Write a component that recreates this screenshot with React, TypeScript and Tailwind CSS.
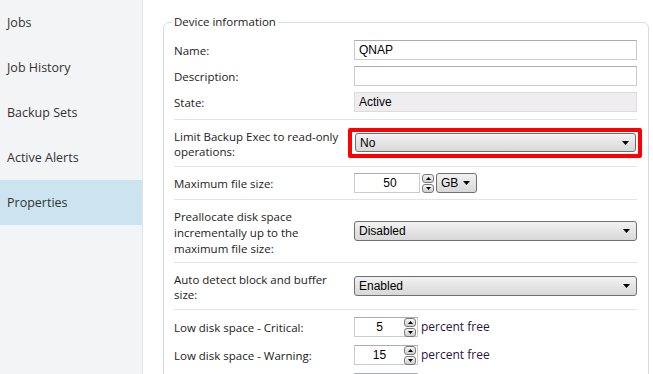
import React from 'react';

// 왼쪽 탐색 메뉴 항목
const navItems = ['Jobs', 'Job History', 'Backup Sets', 'Active Alerts', 'Properties'];

// 드롭다운 화살표 (작은 검은 삼각형)
function Caret() {
  return (
    <svg width="7" height="4" viewBox="0 0 7 4" className="shrink-0">
      <path d="M0 0 H7 L3.5 4 Z" fill="#000" />
    </svg>
  );
}

// 회색 그라데이션 콤보박스
function Select({ value, className = '' }: { value: string; className?: string }) {
  return (
    <div
      className={`flex items-center justify-between rounded-[3px] border border-[#707070] bg-gradient-to-b from-[#f2f2f2] to-[#d8d8d8] pl-[4px] pr-[6px] text-[12px] leading-none text-black font-['Liberation_Sans',Arial,sans-serif] ${className}`}
    >
      <span>{value}</span>
      <Caret />
    </div>
  );
}

// 숫자 증감 버튼 (위/아래)
function Spinner() {
  const btn =
    'flex h-[9px] w-[12px] items-center justify-center rounded-[3px] border border-[#7a7a7a] bg-gradient-to-b from-[#f4f4f4] to-[#cfcfcf]';
  return (
    <div className="flex flex-col justify-center gap-[1px]">
      <div className={btn}>
        <svg width="5" height="3" viewBox="0 0 5 3">
          <path d="M0 3 H5 L2.5 0 Z" fill="#000" />
        </svg>
      </div>
      <div className={btn}>
        <svg width="5" height="3" viewBox="0 0 5 3">
          <path d="M0 0 H5 L2.5 3 Z" fill="#000" />
        </svg>
      </div>
    </div>
  );
}

// 텍스트 입력 상자
function TextBox({ value = '', disabled = false }: { value?: string; disabled?: boolean }) {
  return (
    <div
      className={`flex h-[20px] items-center border ${
        disabled ? 'border-[#dcdcdc] bg-[#efedf0]' : 'border-[#c8ccd0] border-t-[#abadb3] bg-white'
      } px-[4px] text-[12px] text-black font-['Liberation_Sans',Arial,sans-serif]`}
    >
      {value}
    </div>
  );
}

// 퍼센트 입력 (스피너가 상자 안에 있음)
function PercentBox({ value, unit = true }: { value: string; unit?: boolean }) {
  return (
    <div className="flex items-center gap-[3px]">
      <div className="flex h-[20px] w-[64px] items-center border border-[#c8ccd0] border-t-[#abadb3] bg-white pr-[1px]">
        <span className="flex-1 text-center text-[12px] text-black font-['Liberation_Sans',Arial,sans-serif]">{value}</span>
        <Spinner />
      </div>
      {unit && <span className="text-[12px] text-[#2a1440]">percent free</span>}
    </div>
  );
}

function Separator() {
  return <div className="h-px bg-[#e3e3e3]" />;
}

function Row({
  label,
  height,
  children,
}: {
  label: React.ReactNode;
  height: string;
  children: React.ReactNode;
}) {
  return (
    <div className={`flex items-center ${height}`}>
      <div className="w-[180px] shrink-0 leading-[15px]">{label}</div>
      <div className="flex-1">{children}</div>
    </div>
  );
}

export default function App() {
  return (
    <div className="flex h-[374px] w-[653px] overflow-hidden bg-white font-['Open_Sans','Noto_Sans',sans-serif]">
      {/* 사이드바 */}
      <div className="w-[143px] shrink-0 border-r border-[#e1e4e8] bg-[#f3f4f6]">
        {navItems.map((item) => (
          <div
            key={item}
            className={`flex h-[45px] items-center pl-[7px] pt-[2px] text-[12.5px] text-[#333] ${
              item === 'Properties' ? 'bg-[#cce4f0]' : ''
            }`}
          >
            {item}
          </div>
        ))}
      </div>

      {/* 속성 패널 */}
      <div className="flex-1 pl-[20px] pr-[4px] pt-[14px]">
        <fieldset className="h-[400px] rounded-[6px] border border-[#d6dde2] pl-[10px] pr-[11px] text-[11.5px] text-[#222]">
          <legend className="-ml-[2px] px-[2px] leading-[16px]">Device information</legend>

          <div className="pt-[7px]">
            <Row label="Name:" height="h-[26px]">
              <TextBox value="QNAP" />
            </Row>
            <Row label="Description:" height="h-[26px]">
              <TextBox />
            </Row>
            <Row label="State:" height="h-[26px]">
              <TextBox value="Active" disabled />
            </Row>
          </div>

          <div className="mt-[4px]">
            <Separator />
          </div>

          <Row
            label={
              <div className="pt-[2px]">
                Limit Backup Exec to read-only
                <br />
                operations:
              </div>
            }
            height="h-[46px]"
          >
            <div className="-ml-[6px] -mr-[5px] rounded-[2px] border-[4px] border-[#ff0000] pb-[2px] pl-[3px] pr-[2px] pt-[1px]">
              <Select value="No" className="h-[19px]" />
            </div>
          </Row>
          <Separator />

          <Row label="Maximum file size:" height="h-[32px]">
            <div className="flex items-center">
              <div className="flex h-[20px] w-[66px] items-center justify-center border border-[#c8ccd0] border-t-[#abadb3] bg-white pl-[6px] text-[12px] text-black font-['Liberation_Sans',Arial,sans-serif]">
                50
              </div>
              <div className="ml-[2px]">
                <Spinner />
              </div>
              <Select value="GB" className="ml-[2px] h-[20px] w-[41px]" />
            </div>
          </Row>
          <Separator />

          <Row
            label={
              <div className="pt-[3px] leading-[16px]">
                Preallocate disk space
                <br />
                incrementally up to the
                <br />
                maximum file size:
              </div>
            }
            height="h-[62px]"
          >
            <Select value="Disabled" className="h-[20px]" />
          </Row>
          <Separator />

          <Row
            label={
              <div className="pt-[2px]">
                Auto detect block and buffer
                <br />
                size:
              </div>
            }
            height="h-[46px]"
          >
            <Select value="Enabled" className="h-[20px]" />
          </Row>
          <Separator />

          <div className="pt-[3px]">
            <Row label="Low disk space - Critical:" height="h-[28px]">
              <PercentBox value="5" />
            </Row>
            <Row label="Low disk space - Warning:" height="h-[28px]">
              <PercentBox value="15" />
            </Row>
            <Row label="" height="h-[28px]">
              <PercentBox value="" unit={false} />
            </Row>
          </div>
        </fieldset>
      </div>
    </div>
  );
}
